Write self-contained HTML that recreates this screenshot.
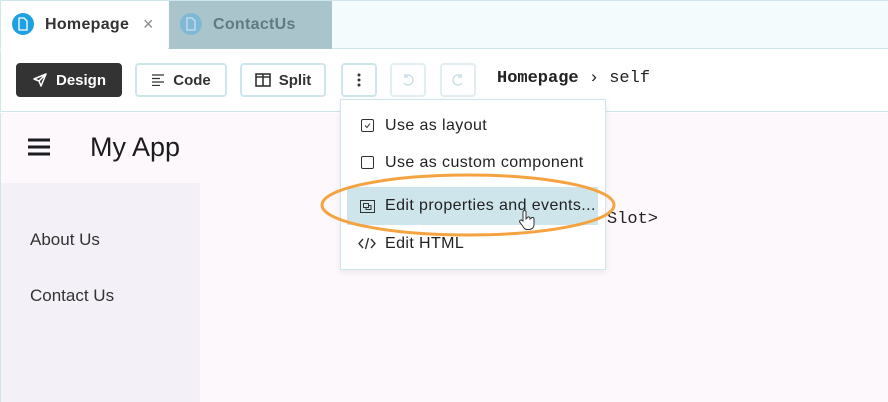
<!DOCTYPE html>
<html><head><style>
*{box-sizing:border-box;margin:0;padding:0}
body{width:888px;height:402px;overflow:hidden;position:relative;font-family:"Liberation Sans",sans-serif;background:#fff}
.abs{position:absolute}
.btn{position:absolute;top:63px;height:34px;border:2px solid #cfe5ec;border-radius:4px;background:#fff;color:#333;font-weight:bold;font-size:15px;display:flex;align-items:center;justify-content:center;gap:8px}
.mono{font-family:"Liberation Mono",monospace}
.item{position:absolute;left:347px;width:251px;height:37px;display:flex;align-items:center;font-size:16px;letter-spacing:0.4px;color:#222}
.item .ic{width:38px;display:flex;justify-content:center;padding-left:2px}
</style></head><body>
<div class="abs" style="left:0;top:0;width:888px;height:49px;background:#f3fbfd;border-bottom:1px solid #cfe5ec;border-top:1px solid #cfe5ec"></div>
<div class="abs" style="left:0;top:1px;width:168px;height:48px;background:#fff;border-left:1px solid #cfe5ec"></div>
<div class="abs" style="left:12px;top:13px;width:22px;height:22px;border-radius:50%;background:#1da1e0"></div>
<svg class="abs" style="left:17px;top:17px" width="12" height="14" viewBox="0 0 12 14"><path d="M2 1h5l3 3v9H2z" fill="none" stroke="#fff" stroke-width="1.3"/></svg>
<div class="abs" style="left:45px;top:16px;font-size:16px;font-weight:bold;color:#333;letter-spacing:0.3px">Homepage</div>
<div class="abs" style="left:143px;top:14px;font-size:18px;color:#888">×</div>
<div class="abs" style="left:169px;top:1px;width:163px;height:48px;background:#a9c4cb"></div>
<div class="abs" style="left:180px;top:13px;width:22px;height:22px;border-radius:50%;background:#7fb9d6"></div>
<svg class="abs" style="left:185px;top:17px" width="12" height="14" viewBox="0 0 12 14"><path d="M2 1h5l3 3v9H2z" fill="none" stroke="#cde" stroke-width="1.3"/></svg>
<div class="abs" style="left:213px;top:16px;font-size:16px;font-weight:bold;color:#627a82;letter-spacing:0.3px">ContactUs</div>
<div class="abs" style="left:0;top:50px;width:888px;height:62px;border-bottom:1px solid #cfe5ec;border-left:1px solid #cfe5ec"></div>
<div class="btn" style="left:16px;width:106px;background:#333;border-color:#333;color:#fff"><svg width="16" height="16" viewBox="0 0 16 16"><path d="M14 2L2 7l5 2 2 5z M7 9l7-7" fill="none" stroke="#fff" stroke-width="1.5" stroke-linejoin="round"/></svg>Design</div>
<div class="btn" style="left:135px;width:92px"><svg width="14" height="12"><path d="M1 1h12M1 4.5h8M1 8h12M1 11.5h8" stroke="#333" stroke-width="1.2"/></svg>Code</div>
<div class="btn" style="left:240px;width:86px"><svg width="16" height="14"><rect x="1" y="1" width="14" height="12" fill="none" stroke="#333" stroke-width="1.6"/><path d="M8 1v12M1 4h14" stroke="#333" stroke-width="1.6"/></svg>Split</div>
<div class="btn" style="left:341px;width:36px"><svg width="4" height="14"><circle cx="2" cy="2" r="1.5" fill="#333"/><circle cx="2" cy="7" r="1.5" fill="#333"/><circle cx="2" cy="12" r="1.5" fill="#333"/></svg></div>
<div class="btn" style="left:390px;width:36px;border-color:#e0eef2"><svg width="14" height="14"><path d="M4 3a5 5 0 1 1-1 7M4 1v3h3" fill="none" stroke="#c8dde3" stroke-width="1.4"/></svg></div>
<div class="btn" style="left:440px;width:36px;border-color:#e0eef2"><svg width="14" height="14"><path d="M10 3a5 5 0 1 0 1 7M10 1v3H7" fill="none" stroke="#c8dde3" stroke-width="1.4"/></svg></div>
<div class="abs mono" style="left:497px;top:69px;font-size:17px;color:#222"><b>Homepage</b>&nbsp;›&nbsp;self</div>
<div class="abs" style="left:0;top:113px;width:888px;height:289px;background:#fdf8fc;border-left:1px solid #cfe5ec"></div>
<svg class="abs" style="left:28px;top:138px" width="22" height="18"><path d="M0 2h22M0 9h22M0 16h22" stroke="#1c1b1f" stroke-width="3"/></svg>
<div class="abs" style="left:90px;top:132px;font-size:27px;color:#1c1b1f">My App</div>
<div class="abs" style="left:1px;top:183px;width:199px;height:219px;background:#f4f0f7"></div>
<div class="abs" style="left:30px;top:230px;font-size:17px;color:#333">About Us</div>
<div class="abs" style="left:30px;top:286px;font-size:17px;color:#333">Contact Us</div>
<div class="abs mono" style="left:607px;top:210px;font-size:17px;color:#222">Slot&gt;</div>
<div class="abs" style="left:340px;top:99px;width:266px;height:171px;background:#fff;border:1px solid #cfe5ec;box-shadow:0 2px 6px rgba(0,0,0,.08)"></div>
<div class="item" style="top:107px"><span class="ic"><svg width="13" height="13"><rect x=".5" y=".5" width="12" height="12" rx="1.5" fill="none" stroke="#333"/><path d="M4 6.5l2 2 3-4" fill="none" stroke="#333"/></svg></span>Use as layout</div>
<div class="item" style="top:144px"><span class="ic"><svg width="13" height="13"><rect x=".5" y=".5" width="12" height="12" rx="1.5" fill="none" stroke="#333"/></svg></span>Use as custom component</div>
<div class="item" style="top:187px;background:#cfe5ec;height:38px"><span class="ic"><svg width="15" height="13"><rect x=".5" y=".5" width="14" height="12" fill="none" stroke="#333"/><rect x="3.5" y="3.5" width="5" height="4" fill="none" stroke="#333"/><path d="M6 7.5v2h5v-4H8.5" fill="none" stroke="#333"/></svg></span>Edit properties and events...</div>
<div class="item" style="top:225px"><span class="ic"><svg width="18" height="13"><path d="M5 2L1 6.5 5 11M13 2l4 4.5-4 4.5M10.5 1l-3 11" fill="none" stroke="#333" stroke-width="1.4"/></svg></span>Edit HTML</div>
<svg class="abs" style="left:318px;top:170px" width="300" height="70"><ellipse cx="150" cy="35" rx="146" ry="30" fill="none" stroke="#f5a340" stroke-width="3"/></svg>
<svg class="abs" style="left:518px;top:209px" width="20" height="22" viewBox="0 0 20 22"><path d="M5 12V3a1.5 1.5 0 0 1 3 0v7l1-1a1.5 1.5 0 0 1 3 1l1-.5a1.5 1.5 0 0 1 3 1v5c0 3-2 5-5 5H9c-2 0-3-1-4-3l-3-4a1.4 1.4 0 0 1 2-2z" fill="#fff" stroke="#333" stroke-width="1"/></svg>
</body></html>
